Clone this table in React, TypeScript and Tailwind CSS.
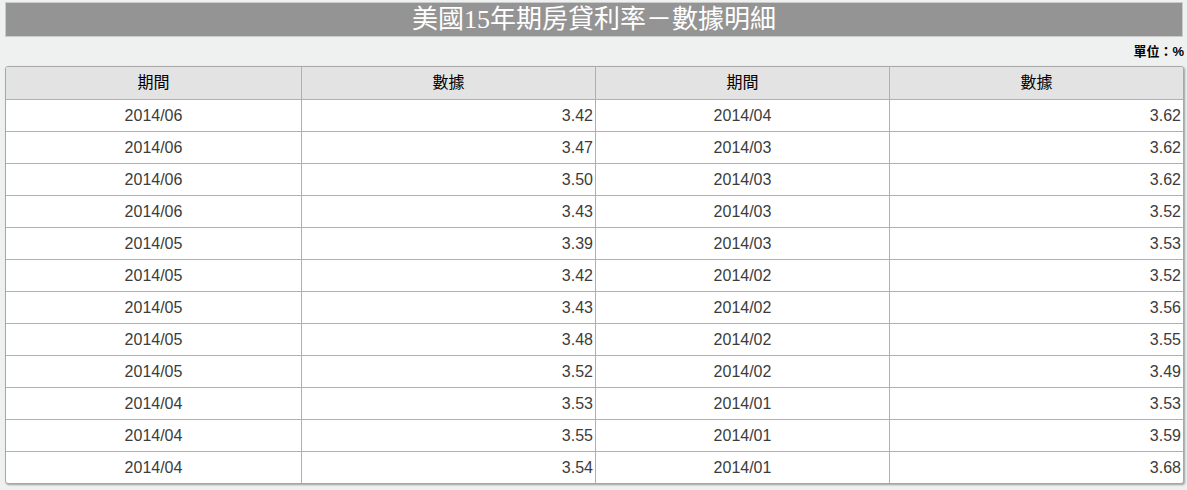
import React from "react";

const left = [
  ["2014/06", "3.42"],
  ["2014/06", "3.47"],
  ["2014/06", "3.50"],
  ["2014/06", "3.43"],
  ["2014/05", "3.39"],
  ["2014/05", "3.42"],
  ["2014/05", "3.43"],
  ["2014/05", "3.48"],
  ["2014/05", "3.52"],
  ["2014/04", "3.53"],
  ["2014/04", "3.55"],
  ["2014/04", "3.54"],
];
const right = [
  ["2014/04", "3.62"],
  ["2014/03", "3.62"],
  ["2014/03", "3.62"],
  ["2014/03", "3.52"],
  ["2014/03", "3.53"],
  ["2014/02", "3.52"],
  ["2014/02", "3.56"],
  ["2014/02", "3.55"],
  ["2014/02", "3.49"],
  ["2014/01", "3.53"],
  ["2014/01", "3.59"],
  ["2014/01", "3.68"],
];

export default function App() {
  return (
    <div
      className="min-h-screen w-[1187px] bg-[#eff1f0] pt-[2px]"
      style={{ fontFamily: '"Liberation Sans", "Noto Sans CJK TC", sans-serif' }}
    >
      <div className="mx-[5px] h-[35px] border border-[#cbcbcb] bg-[#949494] flex items-center justify-center w-[1178px]">
        <h1
          className="text-white text-[26px] leading-none"
          style={{ fontFamily: '"Liberation Serif", "Noto Sans CJK TC", serif' }}
        >
          美國15年期房貸利率－數據明細
        </h1>
      </div>
      <div className="h-[29px] flex items-center justify-end pr-[3px] text-[13px] font-bold text-black">
        單位：%
      </div>
      <div className="ml-[5px] w-[1179px] border border-[#a8a8a8] rounded-[3px] overflow-hidden bg-white shadow-[1px_1px_2px_rgba(0,0,0,0.35)]">
        <div className="grid grid-cols-[296px_294px_294px_293px] text-[16px]">
          {["期間", "數據", "期間", "數據"].map((h, i) => (
            <div
              key={i}
              className={`h-[33px] bg-[#e3e3e3] border-b border-[#b0b0b0] flex items-center justify-center text-black ${
                i < 3 ? "border-r" : ""
              }`}
            >
              {h}
            </div>
          ))}
          {left.map((l, r) => {
            const rr = right[r];
            const last = r === left.length - 1;
            const bb = last ? "h-[31px]" : "h-[32px] border-b";
            return (
              <React.Fragment key={r}>
                <div className={`${bb} border-r border-[#b0b0b0] flex items-center justify-center text-[#3c3c3c]`}>
                  {l[0]}
                </div>
                <div className={`${bb} border-r border-[#b0b0b0] flex items-center justify-end pr-[2px] text-[#3c3c3c]`}>
                  {l[1]}
                </div>
                <div className={`${bb} border-r border-[#b0b0b0] flex items-center justify-center text-[#3c3c3c]`}>
                  {rr[0]}
                </div>
                <div className={`${bb} border-[#b0b0b0] flex items-center justify-end pr-[2px] text-[#3c3c3c]`}>
                  {rr[1]}
                </div>
              </React.Fragment>
            );
          })}
        </div>
      </div>
    </div>
  );
}
